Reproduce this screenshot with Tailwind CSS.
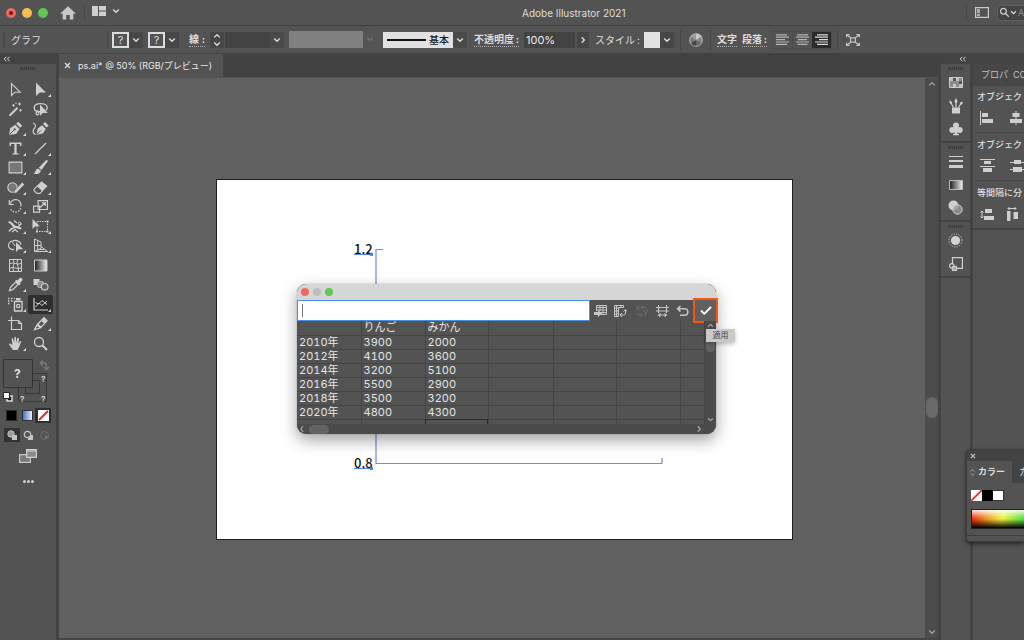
<!DOCTYPE html>
<html lang="ja">
<head>
<meta charset="utf-8">
<title>Adobe Illustrator 2021</title>
<script src="https://cdn.jsdelivr.net/npm/@tailwindcss/browser@4"></script>
</head>
<body class="flex h-screen flex-col overflow-hidden bg-[#535353] font-['Inter','Noto_Sans_CJK_JP',sans-serif] text-[10px] leading-4 whitespace-nowrap text-[#dcdcdc]">

<svg class="hidden" aria-hidden="true">
  <symbol id="down" viewBox="0 0 8 8"><path d="M1.2 2.6 4 5.3 6.8 2.6" fill="none" stroke="currentColor" stroke-width="1.4"/></symbol>
  <symbol id="up" viewBox="0 0 8 8"><path d="M1.2 5.4 4 2.7 6.8 5.4" fill="none" stroke="currentColor" stroke-width="1.3"/></symbol>
  <symbol id="right" viewBox="0 0 8 8"><path d="M2.8 1.2 5.3 4 2.8 6.8" fill="none" stroke="currentColor" stroke-width="1.4"/></symbol>
  <symbol id="left" viewBox="0 0 8 8"><path d="M5.2 1.2 2.7 4 5.2 6.8" fill="none" stroke="currentColor" stroke-width="1.2"/></symbol>
  <symbol id="collapse" viewBox="0 0 8 6"><path d="M3.4 .8 1.2 3l2.2 2.2M6.6 .8 4.4 3l2.2 2.2" fill="none" stroke="currentColor" stroke-width="1"/></symbol>
  <symbol id="grip" viewBox="0 0 16 3"><path d="M0 1.5h16" stroke="#3c3c3c" stroke-width="3" stroke-dasharray="1.2 .8"/></symbol>
  <symbol id="corner" viewBox="0 0 25 19"><path d="M23 14v3h-3z" fill="#dcdcdc"/></symbol>
</svg>

<header class="flex h-[26px] shrink-0 items-center border-b border-[#424242]">
  <div class="flex w-[522px] shrink-0 items-center">
    <div class="flex gap-[6px] pl-[6px]">
      <button aria-label="閉じる" class="flex size-[10px] items-center justify-center rounded-full bg-[#ee6a5f]"><span class="size-1 rounded-full bg-[#7a1510]"></span></button>
      <button aria-label="しまう" class="size-[10px] rounded-full bg-[#f5bf4f]"></button>
      <button aria-label="拡大" class="size-[10px] rounded-full bg-[#61c654]"></button>
    </div>
    <button aria-label="ホーム" class="ml-3"><svg class="size-4" viewBox="0 0 16 16" fill="#c8c8c8"><path d="M8 1.2 15.4 8.2 14.4 9.2 13.3 8.3V14.6H9.8V10H6.2v4.6H2.7V8.3L1.6 9.2.6 8.2z"/></svg></button>
    <span class="ml-2 h-4 w-px bg-[#474747]"></span>
    <button aria-label="ワークスペース配置" class="ml-[7px] flex items-center gap-[6px] pb-[3px]">
      <svg class="h-[10px] w-[14px]" viewBox="0 0 14 10" fill="#cfcfcf"><path d="M0 0h6v10H0zM7 0h7v4.5H7zM7 5.5h7V10H7z"/></svg>
      <svg class="size-2"><use href="#down"/></svg>
    </button>
  </div>
  <h1 class="text-[10px] text-[#dedede]">Adobe Illustrator 2021</h1>
  <div class="ml-auto flex items-center">
    <span class="h-4 w-px bg-[#474747]"></span>
    <button aria-label="画面モード" class="ml-2"><svg class="h-[11px] w-[14px]" viewBox="0 0 14 11"><path d="M.6.6h12.8v9.8H.6z" fill="none" stroke="#c8c8c8" stroke-width="1.2"/><path d="M2 2h3v4H2zM2 6.8h3V9H2z" fill="#a8a8a8"/></svg></button>
    <label class="ml-2 flex h-4 w-[27px] items-center overflow-hidden rounded-l-sm border border-r-0 border-[#5e5e5e] bg-[#444444] pl-px">
      <svg class="size-[11px] shrink-0" viewBox="0 0 11 11" fill="none" stroke="#cccccc" stroke-width="1.3"><circle cx="4.4" cy="4.2" r="2.9"/><path d="m6.5 6.4 3.3 3.4"/></svg>
      <svg class="size-[7px] shrink-0"><use href="#down"/></svg>
      <input aria-label="検索" placeholder="A" class="ml-px w-4 min-w-0 text-[9px] outline-none placeholder:text-[#8c8c8c]">
    </label>
  </div>
</header>

<section aria-label="コントロール" class="flex h-7 shrink-0 items-center border-b border-[#424242] text-[10px]">
  <svg class="ml-[3px] h-4 w-[2px]" viewBox="0 0 2 16"><path d="M1 0v16" stroke="#404040" stroke-width="2" stroke-dasharray="1 1"/></svg>
  <span class="ml-[6px] w-[96px]">グラフ</span>
  <span class="h-5 w-px bg-[#4b4b4b]"></span>
  <div class="ml-1 flex h-4 gap-[5px]">
    <div class="flex"><button aria-label="塗り" class="w-[17px] border-2 border-[#dcdcdc] text-[11px] leading-3">?</button><button aria-label="塗りメニュー" class="flex w-[14px] items-center justify-center bg-[#474747]"><svg class="size-2"><use href="#down"/></svg></button></div>
    <div class="flex"><button aria-label="線" class="w-[17px] border-2 border-[#dcdcdc] text-[11px] leading-3">?</button><button aria-label="線メニュー" class="flex w-[14px] items-center justify-center bg-[#474747]"><svg class="size-2"><use href="#down"/></svg></button></div>
  </div>
  <a href="#" class="ml-[10px] flex w-4 justify-between border-b border-dotted border-[#b0b0b0] leading-[14px] font-bold">線<span>:</span></a>
  <div class="ml-[5px] flex h-4 w-[14px] flex-col items-center justify-between bg-[#474747]">
    <button aria-label="増やす"><svg class="size-2"><use href="#up"/></svg></button>
    <button aria-label="減らす"><svg class="size-2"><use href="#down"/></svg></button>
  </div>
  <div class="relative ml-px h-4 w-[59px] bg-[#434343]">
    <select aria-label="線幅" class="h-4 w-full appearance-none border-r-[14px] border-[#4a4a4a] outline-none"><option></option></select>
    <svg class="pointer-events-none absolute top-1 right-[3px] size-2"><use href="#down"/></svg>
  </div>
  <div class="relative ml-[5px] h-[17px] w-[89px] bg-[#555555]">
    <select aria-label="可変線幅プロファイル" disabled class="h-full w-[74px] appearance-none bg-[#808080] opacity-100"><option></option></select>
    <svg class="pointer-events-none absolute top-1 right-[4px] size-2 text-[#707070]"><use href="#down"/></svg>
  </div>
  <div class="relative ml-[5px] h-4 w-[84px] bg-[#4a4a4a] text-[#1c1c1c]">
    <select aria-label="ブラシ定義" class="h-full w-[70px] appearance-none bg-[#e2e2e2] pl-[46px] text-[10px] leading-4 font-medium outline-none"><option>基本</option></select>
    <span class="pointer-events-none absolute top-[7px] left-1 h-[2px] w-[39px] bg-[#111111]"></span>
    <svg class="pointer-events-none absolute top-1 right-[3px] size-2 text-[#dcdcdc]"><use href="#down"/></svg>
  </div>
  <a href="#" class="ml-[7px] flex w-[45px] justify-between border-b border-dotted border-[#b0b0b0] leading-[14px] font-bold">不透明度<span>:</span></a>
  <input aria-label="不透明度" value="100%" class="ml-[5px] h-4 w-[51px] bg-[#434343] pl-[2px] text-[11px] text-[#ececec] outline-none">
  <button aria-label="不透明度メニュー" class="ml-[2px] flex h-4 w-3 items-center justify-center bg-[#474747]"><svg class="size-2"><use href="#right"/></svg></button>
  <span class="ml-[6px] flex w-[45px] justify-between">スタイル<span>:</span></span>
  <div class="relative ml-1 h-4 w-[30px] bg-[#474747]">
    <select aria-label="スタイル" class="h-full w-4 appearance-none bg-[#e2e2e2] outline-none"><option></option></select>
    <svg class="pointer-events-none absolute top-1 right-[3px] size-2"><use href="#down"/></svg>
  </div>
  <span class="ml-[6px] h-5 w-px bg-[#474747]"></span>
  <button aria-label="オブジェクトを再配色" class="ml-2"><svg class="size-[14px]" viewBox="0 0 14 14"><circle cx="7" cy="7" r="6.6" fill="#9a9a9a"/><path d="M7 7V.4A6.6 6.6 0 0 1 12.7 3.7z" fill="#c8c8c8"/><path d="M7 7 12.7 3.7A6.6 6.6 0 0 1 12.7 10.3z" fill="#858585"/><path d="m7 7 5.7 3.3A6.6 6.6 0 0 1 7 13.6z" fill="#686868"/><path d="M7 7v6.6a6.6 6.6 0 0 1-5.7-3.3z" fill="#444"/><path d="M7 7 1.3 10.3a6.6 6.6 0 0 1 0-6.6z" fill="#787878"/><circle cx="7" cy="7" r="6.3" fill="none" stroke="#bcbcbc" stroke-width=".8"/></svg></button>
  <span class="ml-[7px] h-5 w-px bg-[#474747]"></span>
  <a href="#" class="ml-[6px] border-b border-dotted border-[#b0b0b0] leading-[14px] font-bold">文字</a>
  <a href="#" class="ml-[5px] flex w-[25px] justify-between border-b border-dotted border-[#b0b0b0] leading-[14px] font-bold">段落<span>:</span></a>
  <div class="ml-[5px] flex h-[18px] border border-[#4c4c4c] text-[#b4b4b4]">
    <button aria-label="左揃え" class="flex w-[19px] items-center justify-center"><svg class="h-[11px] w-[13px]" viewBox="0 0 13 11" stroke="currentColor" stroke-width="1.2"><path d="M0 .8h11M0 3.2h13M0 5.6h9M0 8h13M0 10.4h11"/></svg></button>
    <button aria-label="中央揃え" class="flex w-5 items-center justify-center border-l border-[#4c4c4c]"><svg class="h-[11px] w-[13px]" viewBox="0 0 13 11" stroke="currentColor" stroke-width="1.2"><path d="M1 .8h11M0 3.2h13M2 5.6h9M0 8h13M1.500 10.4h10"/></svg></button>
    <button aria-label="右揃え" aria-pressed="true" class="flex w-[19px] items-center justify-center bg-[#2b2b2b] text-[#d8d8d8]"><svg class="h-[11px] w-[13px]" viewBox="0 0 13 11" stroke="currentColor" stroke-width="1.2"><path d="M2 .8h11M0 3.2h13M4 5.600h9M0 8h13M2 10.400h11"/></svg></button>
  </div>
  <span class="ml-[5px] h-5 w-px bg-[#474747]"></span>
  <button aria-label="変形" class="ml-2"><svg class="h-3 w-[14px]" viewBox="0 0 14 12" fill="none" stroke="#c4c4c4" stroke-width="1.2"><path d="M4.600 3.800h4.800v4.400H4.600zM1 1l3.600 2.800M13 1 9.400 3.800M1 11l3.600-2.800M13 11 9.400 8.200"/><path d="M.6 3.200V.6h3M13.400 3.200V.6h-3M.6 8.800v2.600h3M13.400 8.800v2.600h-3"/></svg></button>
</section>

<main class="relative flex min-h-0 flex-1">

  <aside aria-label="ツール" class="flex w-[59px] shrink-0 flex-col border-r-[3px] border-[#434343]">
    <div class="flex h-[10px] items-center bg-[#434343] pl-[3px]"><button aria-label="パネルを折りたたむ"><svg class="h-[6px] w-2"><use href="#collapse"/></svg></button></div>
    <svg class="mx-auto mt-[3px] h-[3px] w-4"><use href="#grip"/></svg>
    <div class="mt-[10px] ml-[3px] grid h-[273px] w-[50px] grid-cols-2 grid-rows-[repeat(14,minmax(0,1fr))] text-[#cfcfcf] [&_svg]:h-[19px] [&_svg]:w-[25px] [&>button]:min-h-0">
      <button aria-label="選択ツール"><svg viewBox="0 0 25 19" fill="none" stroke="currentColor" stroke-width="1.100"><path d="M8.500 3.500v12l3.300-3.200h5.400z"/></svg></button>
      <button aria-label="ダイレクト選択ツール"><svg viewBox="0 0 25 19"><path d="M8 2.500v13.600l3.900-3.700h6z" fill="currentColor"/><use href="#corner"/></svg></button>
      <button aria-label="自動選択ツール"><svg viewBox="0 0 25 19"><path d="M6.500 15.800 14.500 7.800" stroke="currentColor" stroke-width="2"/><path d="M16.500 2.500v3M15 4h3M10.500 4v2.600M9.200 5.300h2.600M17.500 9v2.600M16.200 10.300h2.600M13 2.500v1.400" stroke="currentColor"/></svg></button>
      <button aria-label="なげなわツール"><svg viewBox="0 0 25 19"><path d="M12 11.500C8 12 6 10 6.200 7.600 6.500 5 9.500 3.600 13 3.700c3.600 0 6.200 1.700 6.200 4 0 1-.5 1.900-1.200 2.500M9.500 12c-2 .4-2 3 .3 2.800 1.500-.2 1.500-3.300-.6-4.200" fill="none" stroke="currentColor" stroke-width="1.300"/><path d="M12 4.500v11.300l2.800-2.900h5z" fill="currentColor"/></svg></button>
      <button aria-label="ペンツール"><svg viewBox="0 0 25 19"><path d="M6 16 7.200 9.200 12.200 5.700 16.500 10 13 15z" fill="currentColor"/><path d="m13.200 4.700 2-2 4 4-2 2z" fill="currentColor"/><path d="m6.500 15.500 4.600-4.600" stroke="#535353"/><circle cx="11.700" cy="10.300" r="1.100" fill="#535353"/><use href="#corner"/></svg></button>
      <button aria-label="曲線ツール"><svg viewBox="0 0 25 19"><path d="M8.500 15.800 9.700 9.500 14 6.200l3.800 3.800-3 4.600z" fill="currentColor"/><path d="m15 5 2-2 3.600 3.600-2 2z" fill="currentColor"/><path d="m9 15.300 4-4" stroke="#535353"/><path d="M5 4c3 1 3 3.500 1.300 5.500S4.500 14.500 7.500 15.500" fill="none" stroke="currentColor" stroke-width="1.200"/></svg></button>
      <button aria-label="文字ツール"><svg viewBox="0 0 25 19"><path d="M6.500 3.500h12V7h-1.200l-.6-1.900h-3.100v9l2 .5v1H9.400v-1l2-.5v-9H8.300L7.700 7H6.500z" fill="currentColor"/><use href="#corner"/></svg></button>
      <button aria-label="直線ツール"><svg viewBox="0 0 25 19"><path d="M7 15 18 4" stroke="currentColor" stroke-width="1.200"/><use href="#corner"/></svg></button>
      <button aria-label="長方形ツール"><svg viewBox="0 0 25 19"><path d="M6.100 4.100h12.800v10.800H6.100z" fill="#777" stroke="currentColor" stroke-width="1.100"/><use href="#corner"/></svg></button>
      <button aria-label="ブラシツール"><svg viewBox="0 0 25 19" fill="currentColor"><path d="M19.800 3.200 13.400 12 10.800 9.800 18 2.200q1.800-.6 1.800 1zM10 10.500l2.800 2.200c0 3-4 4-7.300 3 2.200-.6 1.400-4.400 4.500-5.200z"/><use href="#corner"/></svg></button>
      <button aria-label="Shaperツール"><svg viewBox="0 0 25 19"><circle cx="9.500" cy="9.500" r="4.700" fill="#777" stroke="currentColor" stroke-width="1.100"/><path d="m10.800 15.600.8-3.200L19.200 4.300l2.300 2.200-7.900 8.200z" fill="currentColor" stroke="#535353" stroke-width=".5"/><use href="#corner"/></svg></button>
      <button aria-label="消しゴムツール"><svg viewBox="0 0 25 19"><path d="m6 11.300 3.500-3.500 5 5-2.600 2.600H8.800L6 12.500z" fill="none" stroke="currentColor" stroke-width="1.100"/><path d="M9.300 7.500 13.500 3.300 19.500 8l-4.800 5z" fill="currentColor"/><use href="#corner"/></svg></button>
      <button aria-label="回転ツール"><svg viewBox="0 0 25 19" fill="none" stroke="currentColor" stroke-width="1.200"><path d="M7.300 6.500a5.400 5.400 0 0 1 10.500 3"/><path d="M17.700 11a5.400 5.400 0 0 1-10.500 0" stroke-dasharray="1.600 1.200"/><path d="M6.300 3v4.500h4.500"/><path d="M23 14v3h-3z" fill="currentColor" stroke="none"/></svg></button>
      <button aria-label="拡大・縮小ツール"><svg viewBox="0 0 25 19" fill="none" stroke="currentColor" stroke-width="1.200"><path d="M5.600 9.100h6v6h-6zM10.100 3.600h9.300v8.900h-9.300z"/><path d="m12 10.500 5-4.500M14 5.800h3.300V9"/><path d="M23 14v3h-3z" fill="currentColor" stroke="none"/></svg></button>
      <button aria-label="線幅ツール"><svg viewBox="0 0 25 19" fill="none" stroke="currentColor"><path d="M5.500 5c4 0 3 3 6 4.500s4.500 0 6.500 2.500" stroke-width="2.200"/><path d="M6 14.500c3-6 9-2 12.500-8M11 3.500l3 2.500M9 15l3-2.500 3 2.500" stroke-width="1.300"/><circle cx="16.500" cy="6.500" r="1.300"/><path d="M23 14v3h-3z" fill="currentColor" stroke="none"/></svg></button>
      <button aria-label="自由変形ツール"><svg viewBox="0 0 25 19"><path d="M9 4.500h10.500v10H9z" fill="none" stroke="currentColor" stroke-dasharray="1.500 1"/><path d="M4.500 2v10l2.800-2.700h4.500z" fill="currentColor"/><path d="M18.500 3.500h2v2h-2zM18.500 13.500h2v2h-2zM8 13.500h2v2H8z" fill="currentColor"/><use href="#corner"/></svg></button>
      <button aria-label="シェイプ形成ツール"><svg viewBox="0 0 25 19"><path d="M11 13.500c-3.500.3-5.500-1.700-5.500-4s2-4.300 4.500-4.300c1-1.300 6.800-1.200 8 3.500" fill="none" stroke="currentColor" stroke-width="1.200"/><path d="M9 6.500a6 6 0 0 1 3 3.500" fill="none" stroke="currentColor"/><path d="M13 6v10l2.700-2.700h4.500z" fill="currentColor"/><use href="#corner"/></svg></button>
      <button aria-label="遠近グリッドツール"><svg viewBox="0 0 25 19" fill="none" stroke="currentColor"><path d="M6.500 3v12.500H20M6.500 3l6.500 3v6.500l-6.500 3M6.500 9.500h6.500M9.700 4.500V14M13 10.500l6.500 5M9 13.500h7"/><path d="M23 14v3h-3z" fill="currentColor" stroke="none"/></svg></button>
      <button aria-label="メッシュツール"><svg viewBox="0 0 25 19" fill="none" stroke="currentColor"><path d="M6.500 3.500h12v12h-12z"/><path d="M6.500 8c4-3 8 2 12-1M6.500 12.500c4-3 8 2 12-1M10 3.500c3 4-2 8 1 12M15 3.500c-3 4 2 8 0 12"/></svg></button>
      <button aria-label="グラデーションツール"><svg viewBox="0 0 25 19"><defs><linearGradient id="gt"><stop stop-color="#1d1d1d"/><stop offset="1" stop-color="#f0f0f0"/></linearGradient></defs><path d="M6.500 4h12.500v11H6.500z" fill="url(#gt)" stroke="currentColor"/></svg></button>
      <button aria-label="スポイトツール"><svg viewBox="0 0 25 19"><path d="M6.500 15.500 7.500 12.300l5.300-5.200 2.300 2.300-5.300 5.200z" fill="none" stroke="currentColor" stroke-width="1.300"/><path d="m12 6 1.300-1.300 1 .9 2.300-2.400q1.500-1 2.500.2t0 2.400l-2.200 2.200 1 1L16.500 10.300z" fill="currentColor"/><use href="#corner"/></svg></button>
      <button aria-label="ブレンドツール"><svg viewBox="0 0 25 19"><path d="M5.500 4h6v6h-6z" fill="currentColor"/><rect x="9.500" y="6.500" width="6" height="6" rx="2" fill="#8c8c8c" stroke="#bdbdbd"/><circle cx="16.700" cy="11.800" r="3.300" fill="#606060" stroke="currentColor" stroke-width="1.100"/></svg></button>
      <button aria-label="シンボルスプレーツール"><svg viewBox="0 0 25 19"><path d="M11.500 6.500h7.500v9.500h-7.500z" fill="none" stroke="currentColor" stroke-width="1.300"/><path d="M13 3h4.500v2.500H13z" fill="currentColor"/><circle cx="15.200" cy="11" r="1.700" fill="none" stroke="currentColor" stroke-width="1.200"/><path d="M5 3.500h1.500M8 3.500h1.500M5 6h1.500M8 6h1.500M5 8.500h1.500M11 3.500h1" stroke="currentColor" stroke-width="1.300"/><use href="#corner"/></svg></button>
      <button aria-label="グラフツール" aria-pressed="true" class="rounded-xs bg-[#2e2e2e]"><svg viewBox="0 0 25 19" fill="none" stroke="currentColor"><path d="M6 3v12h14" stroke-width="1.200"/><path d="m7.500 12 3.500-4 3 2.500L19 6M7.500 7.500l3 1.500 3.500-3.500 5 4"/><path d="M23 14v3h-3z" fill="currentColor" stroke="none"/></svg></button>
      <button aria-label="アートボードツール"><svg viewBox="0 0 25 19" fill="none" stroke="currentColor" stroke-width="1.200"><path d="M5 6.500h4M8.500 2.500v4M8.500 6.500h7l3 3v6h-10z"/><path d="M15.500 6.500v3h3"/></svg></button>
      <button aria-label="スライスツール"><svg viewBox="0 0 25 19"><path d="M6.500 15.700 9 11l3.500 2.800zM9.700 10.200 16 3.700l3 3-5.800 6.500z" fill="none" stroke="currentColor" stroke-width="1.300"/><path d="m13.500 7 2.700-3.500 3 3-3 3z" fill="currentColor"/><use href="#corner"/></svg></button>
      <button aria-label="手のひらツール"><svg viewBox="0 0 25 19"><path d="M9.800 16 6 10.300q.2-1.400 1.800-.6l1.700 1.500L8.600 5q.8-1.300 1.600 0l1 3.800.2-5.500q.8-1.200 1.600 0l.2 5.500 1.200-4.700q1-1 1.600.2l-.7 5.500 1.500-2.600q1-.7 1.500.4L16.200 13l-1.700 3z" fill="currentColor"/><use href="#corner"/></svg></button>
      <button aria-label="ズームツール"><svg viewBox="0 0 25 19" fill="none" stroke="currentColor"><circle cx="11" cy="8" r="4.500" stroke-width="1.300"/><path d="m14.300 11.300 4.700 4.700" stroke-width="2"/></svg></button>
    </div>
    <button aria-label="塗りと線" class="mt-[6px] ml-[3px] h-[46px] w-[48px]">
      <svg class="h-[46px] w-[48px] font-bold" viewBox="0 0 48 46">
        <path d="M15.500 14.500h28v28h-28z" fill="#535353" stroke="#373737"/>
        <path d="M22.500 21.500h14v13h-14z" fill="#535353" stroke="#373737"/>
        <path d="M.5.500h29v28H.5z" fill="#535353" stroke="#343434"/>
        <text x="11" y="19" font-size="12" fill="#ddd">?</text>
        <text x="38" y="23" font-size="8" fill="#ccc">?</text><text x="17" y="43" font-size="8" fill="#ccc">?</text><text x="38" y="43" font-size="8" fill="#ccc">?</text>
        <path d="M38 4h3q2.500 0 2.500 3v3M40 1.500 37.300 4 40 6.500M41 8l2.500 2.700L46 8" fill="none" stroke="#7a7a7a" stroke-width="1.300"/>
        <path d="M4 37h5v5H4z" fill="#111" stroke="#ddd" stroke-width="1.500"/><path d="M.5 33.500h6v6h-6z" fill="#fff" stroke="#222"/>
      </svg>
    </button>
    <div class="mt-[3px] ml-[3px] grid w-12 grid-cols-3">
      <button aria-label="カラー" class="flex h-[15px] items-center justify-center"><span class="size-[11px] border border-[#2a2a2a] bg-black"></span></button>
      <button aria-label="グラデーション" class="flex h-[15px] items-center justify-center"><span class="size-[11px] border border-[#333333] bg-linear-to-r from-[#3c7cc4] to-[#e8f0f8]"></span></button>
      <button aria-label="なし" aria-pressed="true" class="flex h-[15px] items-center justify-center bg-[#2e2e2e]"><svg class="size-[11px] bg-white" viewBox="0 0 11 11"><path d="M1 10 10 1" stroke="#e8261c" stroke-width="2"/></svg></button>
    </div>
    <div class="mt-[5px] ml-1 grid w-12 grid-cols-3 text-[#c4c4c4] [&_svg]:size-[11px] [&>button]:flex [&>button]:h-[14px] [&>button]:items-center [&>button]:justify-center">
      <button aria-label="標準描画" aria-pressed="true" class="bg-[#333333]"><svg viewBox="0 0 11 11"><circle cx="4" cy="4" r="3.200" fill="#999" stroke="currentColor"/><path d="M5 5h5v5H5z" fill="currentColor"/></svg></button>
      <button aria-label="背面描画"><svg viewBox="0 0 11 11"><path d="M5 5h5v5H5z" fill="currentColor"/><circle cx="4.500" cy="4.500" r="3.200" fill="#555" stroke="currentColor" stroke-width="1.200"/></svg></button>
      <button aria-label="内側描画" disabled class="text-[#707070]"><svg viewBox="0 0 11 11"><circle cx="5.500" cy="5.500" r="4" fill="none" stroke="currentColor"/><path d="M5.500 5.500h3.500q0 3-3.500 3.500z" fill="currentColor"/></svg></button>
    </div>
    <button aria-label="スクリーンモード" class="mx-auto mt-[7px]"><svg class="h-[14px] w-[18px]" viewBox="0 0 18 14"><path d="M.6 5.600h10.800v7.800H.6z" fill="#777" stroke="#c8c8c8" stroke-width="1.200"/><path d="M7.600.6h9.800v7.800H7.600z" fill="#888" stroke="#d0d0d0" stroke-width="1.200"/><path d="M7.500 2h10" stroke="#d0d0d0"/></svg></button>
    <button aria-label="ツールバーを編集" class="mx-auto mt-[17px] flex gap-px"><span class="size-[3px] rounded-full bg-[#d0d0d0]"></span><span class="size-[3px] rounded-full bg-[#d0d0d0]"></span><span class="size-[3px] rounded-full bg-[#d0d0d0]"></span></button>
  </aside>

  <section class="flex min-w-0 flex-1 flex-col">
    <div role="tablist" class="flex h-[23px] shrink-0 bg-[#424242]">
      <div role="tab" aria-selected="true" class="flex w-[164px] items-center gap-[7px] bg-[#535353] pl-[5px] text-[9px] text-[#e8e8e8]"><button aria-label="タブを閉じる"><svg class="size-[7px]" viewBox="0 0 7 7"><path d="m1 1 5 5M6 1 1 6" stroke="#ddd" stroke-width="1.300"/></svg></button><span>ps.ai* @ 50% (RGB/プレビュー)</span></div>
    </div>
    <div class="flex min-h-0 flex-1 border-t border-b-2 border-t-[#555555] border-b-[#454545]">
      <div class="relative min-w-0 flex-1 bg-[#606060]">
        <div class="absolute top-[101px] left-[157px] h-[361px] w-[577px] border border-[#1e1e1e] bg-white">
          <svg class="h-[359px] w-[575px]" viewBox="0 0 575 359">
            <path d="M166 69.500h-7v214h286v-5.500" fill="none" stroke="#7488e6" stroke-width="1.200"/>
            <text x="137" y="74" font-size="13" font-family="'Noto Sans CJK JP',sans-serif" font-weight="500" fill="#111">1.2</text><text x="137" y="288" font-size="13" font-family="'Noto Sans CJK JP',sans-serif" font-weight="500" fill="#111">0.8</text>
            <path d="M137 74.500h17M137 288.500h17" stroke="#4f7ff0"/><path d="M153 73h3v3h-3zM153 287h3v3h-3z" fill="#4f7ff0"/>
          </svg>
        </div>
      </div>
      <div class="flex w-[13px] shrink-0 flex-col items-center bg-[#4c4c4c] py-[2px] text-[#a0a0a0]">
        <svg class="size-2"><use href="#up"/></svg>
        <div class="mt-[309px] h-[21px] w-3 rounded-full bg-[#686868]"></div>
        <svg class="mt-auto size-2"><use href="#down"/></svg>
      </div>
    </div>
  </section>

  <aside class="flex w-[86px] shrink-0 flex-col border-l-[3px] border-[#434343]">
    <div class="flex h-[10px] shrink-0 items-center bg-[#434343] pl-[18px]"><button aria-label="パネルを展開"><svg class="h-[6px] w-2"><use href="#collapse"/></svg></button></div>
    <div class="flex min-h-0 flex-1">
      <div class="flex w-[32px] shrink-0 flex-col border-r-[3px] border-[#434343] text-[#cfcfcf] [&_button]:flex [&_button]:h-[23px] [&_button]:items-center [&_button]:justify-center">
        <div class="flex flex-col border-b-2 border-[#434343] pb-px">
          <svg class="mx-auto mt-[3px] mb-px h-[3px] w-4"><use href="#grip"/></svg>
          <button aria-label="スウォッチ"><svg class="h-[11px] w-[14px]" viewBox="0 0 14 11"><path d="M.5.500h13v10H.5z" fill="#8a8a8a" stroke="#ccc"/><path d="M1 1h3v3H1zM7 1h3v3H7zM4 7h3v3H4zM10 7h3v3h-3z" fill="#c4c4c4"/><path d="M4 1h3v3H4zM10 4h3v3h-3z" fill="#555"/></svg></button>
          <button aria-label="ブラシ"><svg class="size-4" viewBox="0 0 16 16" fill="currentColor"><path d="M4 9.500h8v6H4z"/><path d="M5.500 9.500 3 5M8 9.500V5M10.500 9.500 13 5.500" stroke="currentColor" stroke-width="1.200"/><path d="M1.200 2.500 3 3q1.700 1.500.8 3.200Q1.500 6 1.200 2.500zM8 0q2 2.500 1 5H7Q6 2.500 8 0zM14.800 3.500q.2 2.500-1.800 3.300-1.700-1-1-2.300z"/></svg></button>
          <button aria-label="シンボル"><svg class="h-[14px] w-[14px]" viewBox="0 0 14 14" fill="currentColor"><circle cx="7" cy="3.500" r="3"/><circle cx="3.300" cy="8" r="3"/><circle cx="10.700" cy="8" r="3"/><path d="M6 6h2l.5 6H10v1.300H4V12h1.500z"/></svg></button>
        </div>
        <div class="flex flex-col border-b-2 border-[#434343] pb-px">
          <svg class="mx-auto mt-[3px] mb-px h-[3px] w-4"><use href="#grip"/></svg>
          <button aria-label="線パネル"><svg class="h-3 w-[14px]" viewBox="0 0 14 12" fill="currentColor"><path d="M0 0h14v1H0zM0 4h14v2H0zM0 9h14v3H0z"/></svg></button>
          <button aria-label="グラデーションパネル"><svg class="h-[10px] w-[14px]" viewBox="0 0 14 10"><path d="M.5.500h13v9H.5z" fill="url(#gt)" stroke="#bbb"/></svg></button>
          <button aria-label="透明パネル"><svg class="size-[15px]" viewBox="0 0 15 15"><circle cx="5.500" cy="5.500" r="5" fill="#cfcfcf"/><circle cx="9.500" cy="9.500" r="4.700" fill="#9a9a9a" fill-opacity=".8" stroke="#d0d0d0"/></svg></button>
        </div>
        <div class="flex flex-col border-b-2 border-[#434343] pb-px">
          <svg class="mx-auto mt-[3px] mb-px h-[3px] w-4"><use href="#grip"/></svg>
          <button aria-label="アピアランス"><svg class="size-[15px]" viewBox="0 0 15 15"><circle cx="7.500" cy="7.500" r="4.600" fill="#d4d4d4"/><circle cx="7.500" cy="7.500" r="6.500" fill="none" stroke="#c8c8c8" stroke-dasharray="1.200 1.350"/></svg></button>
          <button aria-label="グラフィックスタイル"><svg class="size-[14px]" viewBox="0 0 14 14" fill="none" stroke="currentColor" stroke-width="1.200"><path d="M3.500 7V.6h9.900v10.800H8"/><circle cx="2.900" cy="8.900" r="2.300"/><path d="M3.500 9.500h4v4h-4z" fill="#aaa"/></svg></button>
        </div>
      </div>

      <div class="min-w-0 flex-1 overflow-hidden">
        <div role="tablist" class="flex h-[22px] items-center bg-[#474747] text-[9px] text-[#c0c0c0]">
          <button role="tab" aria-selected="true" class="w-[34px] shrink-0 border-r border-[#3f3f3f] pl-2 text-left">プロパ</button>
          <button role="tab" class="pl-[6px]">CC</button>
        </div>
        <div class="border-b-2 border-[#434343] text-[#dedede] [&_h2]:pl-1 [&_h2]:text-[9px] [&_h2]:font-medium">
          <div class="border-b border-[#4b4b4b] pt-[3px]">
            <h2>オブジェク</h2>
            <div class="flex gap-[17px] pt-[6px] pb-[7px] pl-[7px] text-[#cfcfcf]">
              <button aria-label="水平方向左に整列"><svg class="h-[14px] w-[13px]" viewBox="0 0 13 14" fill="currentColor"><path d="M0 0h1v14H0zM2 2h6v4H2zM2 8h11v4H2z"/></svg></button>
              <button aria-label="水平方向中央に整列"><svg class="h-[14px] w-3" viewBox="0 0 12 14" fill="currentColor"><path d="M5.500 0h1v14h-1zM2.500 2h7v4h-7zM0 8h12v4H0z"/></svg></button>
            </div>
          </div>
          <div class="border-b border-[#4b4b4b] pt-[4px]">
            <h2>オブジェク</h2>
            <div class="flex gap-[15px] pt-[6px] pb-[7px] pl-[7px] text-[#cfcfcf]">
              <button aria-label="垂直方向上に整列"><svg class="h-[14px] w-[15px]" viewBox="0 0 15 14" fill="currentColor"><path d="M0 0h15v1H0zM4 2h7v3H4zM0 7h15v1H0zM3 9h9v4H3z"/></svg></button>
              <button aria-label="垂直方向中央に整列"><svg class="h-[14px] w-[15px]" viewBox="0 0 15 14" fill="currentColor"><path d="M0 3h15v1H0zM4 1h7v4H4zM0 10h15v1H0zM3 8h9v5H3z"/></svg></button>
            </div>
          </div>
          <div class="pt-[4px]">
            <h2>等間隔に分</h2>
            <div class="flex gap-[12px] pt-[6px] pb-[7px] pl-[7px] text-[#cfcfcf]">
              <button aria-label="垂直方向に分布"><svg class="h-[14px] w-[14px]" viewBox="0 0 14 14" fill="currentColor"><path d="M5 2h7v4H5zM4 9h10v4H4z"/><path d="M2 4v7M.5 5.500 2 4l1.500 1.500M.5 9.500 2 11l1.500-1.500" fill="none" stroke="currentColor"/></svg></button>
              <button aria-label="水平方向に分布"><svg class="h-[14px] w-3" viewBox="0 0 12 14" fill="currentColor"><path d="M1 4h3.500v10H1zM7.500 5H12v7H7.500z"/><path d="M2 1.500h8M3.500 0 2 1.500 3.500 3M8.500 0 10 1.500 8.500 3" fill="none" stroke="currentColor"/></svg></button>
            </div>
          </div>
        </div>
      </div>
    </div>
  </aside>

  <section aria-label="カラー" class="absolute top-[395px] right-0 w-[58px] overflow-hidden rounded-l-sm border border-r-0 border-[#3c3c3c] bg-[#535353] shadow-[0_2px_4px_#0008]">
    <div class="flex h-[11px] items-center bg-[#434343] pl-[3px]"><button aria-label="パネルを閉じる"><svg class="size-[6px]" viewBox="0 0 7 7"><path d="m1 1 5 5M6 1 1 6" stroke="#c8c8c8" stroke-width="1.200"/></svg></button></div>
    <div role="tablist" class="flex h-[22px] bg-[#434343] text-[9px]">
      <button role="tab" aria-selected="true" class="flex w-[45px] shrink-0 items-center gap-[3px] bg-[#535353] pl-[3px] font-bold"><svg class="h-[7px] w-[5px]" viewBox="0 0 5 7"><path d="M.5 2.700 2.500.7l2 2M.5 4.300l2 2 2-2" fill="none" stroke="#a0a0a0"/></svg>カラー</button>
      <button role="tab" class="pl-[7px]">カ</button>
    </div>
    <div class="flex pt-[7px] pl-[4px]">
      <svg class="size-[11px] bg-white" viewBox="0 0 11 11"><path d="M0 11 11 0" stroke="#e8261c" stroke-width="1.600"/></svg><span class="size-[11px] bg-black"></span><span class="size-[11px] border border-[#333333] border-l-0 bg-white"></span>
    </div>
    <div class="mt-2 ml-1 h-5 border border-r-0 border-[#222222] bg-[linear-gradient(to_bottom,#ffffffe0,#ffffff00_45%,#00000000_50%,#000000_100%),linear-gradient(to_right,#f03018,#f0b030_35%,#f4f040_58%,#50e040)]"></div>
    <div class="mt-[6px] h-[6px] border-t border-[#3c3c3c]"></div>
  </section>

  <section role="dialog" aria-label="グラフデータ" class="absolute top-[230px] left-[297px] w-[419px] rounded-[9px] bg-[#4b4b4b] shadow-[0_6px_16px_#00000060,0_0_1px_#00000080]">
    <div class="flex h-4 items-center gap-1 rounded-t-[9px] bg-[#d6d6d6] pl-1">
      <button aria-label="閉じる" class="size-2 rounded-full bg-[#ee6a5f]"></button><button aria-label="しまう" disabled class="size-2 rounded-full bg-[#bdbdbd]"></button><button aria-label="拡大" class="size-2 rounded-full bg-[#61c654]"></button>
    </div>
    <div class="flex h-[21px] items-center bg-[#535353] text-[#c6c6c6]">
      <div class="relative h-[21px] w-[293px] shrink-0 border border-[#4a90e2] bg-white"><input aria-label="セルの値" class="block size-full bg-white pl-[5px] text-[11px] text-[#222222] outline-none"><span class="absolute top-[3px] left-1 h-[13px] w-px bg-[#777777]"></span></div>
      <div class="flex min-w-0 flex-1 items-center [&>button]:flex [&>button]:min-w-0 [&>button]:flex-1 [&>button]:justify-center [&_svg]:h-3 [&_svg]:w-[13px]">
        <button aria-label="データの読み込み"><svg viewBox="0 0 13 12" fill="none" stroke="currentColor"><path d="M2.500 6V.5h10v9H7M2.500 2.500h10M2.500 5h10M6 .5V6M9 .5v9M6 7.500h6.500"/><path d="M0 7h4V5l4 3.500L4 12v-2H0z" fill="currentColor" stroke="none"/></svg></button>
        <button aria-label="行列置換"><svg viewBox="0 0 13 12" fill="none" stroke="currentColor"><path d="M.5.500h9v2h-5v9h-4zM.5 3h4M.5 6h4M.5 9h4M2.500.5v11M7 .5v2"/><path d="M6.500 10h3q2 0 2-2V5M8 8 6 10l2 2M9.500 6.500l2-2 1.500 2"/></svg></button>
        <button aria-label="XとYを入れ換え" disabled class="text-[#717171]"><svg viewBox="0 0 13 12" fill="none" stroke="currentColor"><path d="m1 1 3.500 4.500M4.500 1 1 5.500M8.500 5l2 3.500M12.500 5l-3 6.500M6.500 2h2.500q1.500 0 1.500 2M6.500 10H4q-1.500 0-1.500-2M7.500.5 6 2l1.500 1.500M5.500 8.500 7 10l-1.500 1.500"/></svg></button>
        <button aria-label="セル書式"><svg viewBox="0 0 13 12" fill="none" stroke="currentColor"><path d="M0 2.500h13M0 6h13M2.500 0v8M10.500 0v8M2.500 10h8M4.500 8.300 2.500 10l2 1.700M8.500 8.300l2 1.700-2 1.700" stroke-width="1.100"/></svg></button>
        <button aria-label="復帰"><svg viewBox="0 0 13 12" fill="none" stroke="currentColor" stroke-width="1.500"><path d="M2 3.800h6.500q3.300 0 3.300 3.200t-3.300 3.200H4M4.500 1 1.500 3.800l3 2.800"/></svg></button>
      </div>
      <button aria-label="適用" aria-describedby="tip" class="-mr-0.5 flex h-[25px] w-[25px] shrink-0 items-center justify-center border-2 border-[#ee5a11] bg-[#606060]"><svg class="h-[9px] w-3" viewBox="0 0 12 9"><path d="m1 4.500 3.300 3.300L11 1" fill="none" stroke="#fff" stroke-width="1.800"/></svg></button>
    </div>
    <div class="flex bg-[#535353]">
      <div class="h-[103px] min-w-0 flex-1 overflow-hidden">
        <table class="w-full table-fixed border-collapse text-[11px] leading-[13px] tabular-nums text-[#e4e4e4] [&_td]:h-[14px] [&_td]:border-r [&_td]:border-b [&_td]:border-[#444444] [&_td]:p-0 [&_td]:pl-[2px] [&_th]:h-[14px] [&_th]:border-r [&_th]:border-b [&_th]:border-[#444444] [&_th]:p-0 [&_th]:pl-[2px] [&_th]:text-left [&_th]:font-normal">
          <colgroup><col class="w-[64px]"><col class="w-[64px]"><col class="w-[63px]"><col class="w-[65px]"><col class="w-[63px]"><col class="w-[64px]"><col></colgroup>
          <tr><td></td><th scope="col">りんご</th><th scope="col">みかん</th><td></td><td></td><td></td><td></td></tr>
          <tr><th scope="row">2010年</th><td>3900</td><td>2000</td><td></td><td></td><td></td><td></td></tr>
          <tr><th scope="row">2012年</th><td>4100</td><td>3600</td><td></td><td></td><td></td><td></td></tr>
          <tr><th scope="row">2014年</th><td>3200</td><td>5100</td><td></td><td></td><td></td><td></td></tr>
          <tr><th scope="row">2016年</th><td>5500</td><td>2900</td><td></td><td></td><td></td><td></td></tr>
          <tr><th scope="row">2018年</th><td>3500</td><td>3200</td><td></td><td></td><td></td><td></td></tr>
          <tr><th scope="row">2020年</th><td>4800</td><td>4300</td><td></td><td></td><td></td><td></td></tr>
          <tr><td></td><td></td><td class="outline-1 -outline-offset-1 outline-[#2c2c2c]"></td><td></td><td></td><td></td><td></td></tr>
        </table>
      </div>
      <div class="flex w-[11px] shrink-0 flex-col items-center bg-[#4b4b4b] py-px text-[#a0a0a0]">
        <svg class="size-[7px]"><use href="#up"/></svg>
        <div class="mt-[2px] h-[21px] w-[9px] rounded-full bg-[#626262]"></div>
        <svg class="mt-auto size-[7px]"><use href="#down"/></svg>
      </div>
    </div>
    <div class="flex h-[10px] items-center pr-[13px] pl-px text-[#a0a0a0]">
      <svg class="size-2"><use href="#left"/></svg>
      <div class="ml-[3px] h-[9px] w-5 rounded-full bg-[#626262]"></div>
      <svg class="ml-auto size-2"><use href="#right"/></svg>
    </div>
    <div role="tooltip" id="tip" class="absolute top-[45px] left-[409px] w-[29px] bg-[#c9c9c9] text-center text-[8px] leading-[13px] text-[#444444] shadow-[0_2px_4px_#00000040]">適用</div>
  </section>
</main>
</body>
</html>
